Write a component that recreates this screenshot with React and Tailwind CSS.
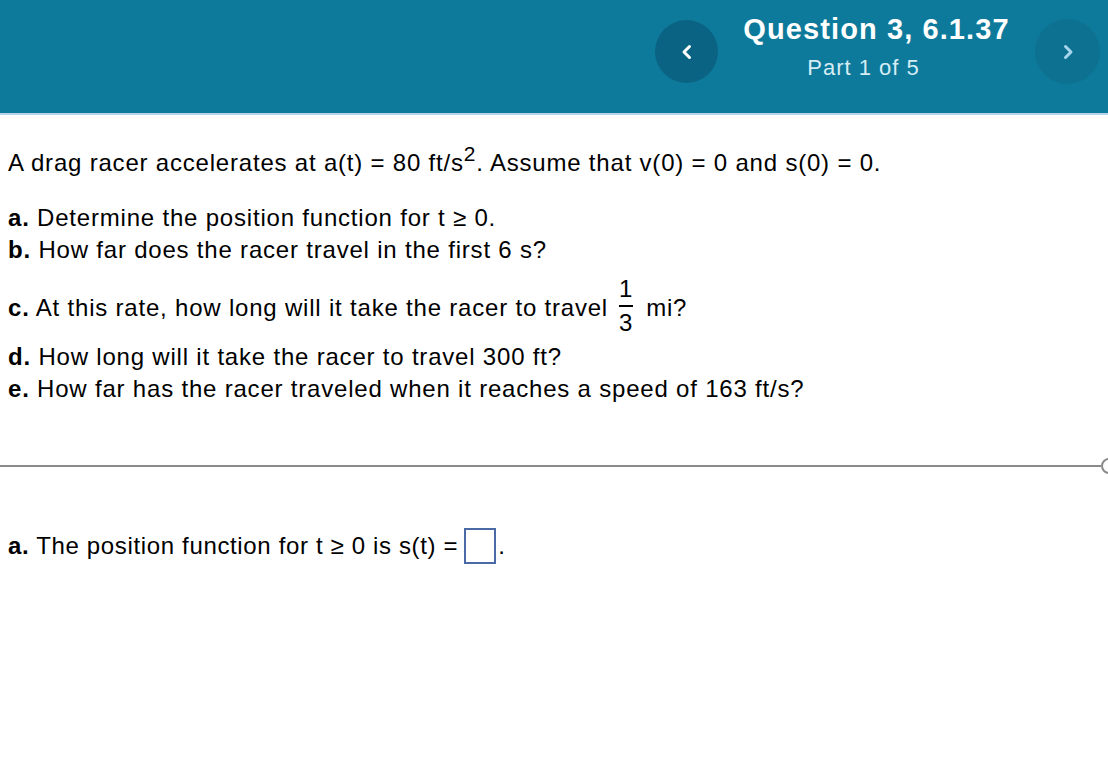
export default function App() {
  const font = { fontFamily: '"Liberation Sans", Arial, sans-serif' };
  return (
    <div className="w-[1108px] h-[766px] bg-white overflow-hidden relative" style={font}>
      <div className="h-[113px] bg-[#0e7a9b] border-b-2 border-[#b9d3ea] box-content flex items-center">
        <div className="flex-1" />
        <div className="w-[63px] h-[63px] rounded-full bg-[#0b6383] flex items-center justify-center mt-[-10px]">
          <svg width="14" height="16" viewBox="0 0 14 16"><path d="M9.5 2.5 L4 8 L9.5 13.5" stroke="#fff" strokeWidth="3" fill="none" strokeLinecap="round" strokeLinejoin="round" /></svg>
        </div>
        <div className="w-[317px] flex flex-col items-center mt-[-22px]">
          <div className="text-[29px] font-bold text-white leading-[36px] tracking-[1.1px]">Question 3, 6.1.37</div>
          <div className="text-[22px] text-[#d6ecf5] leading-[26px] mt-[8px] tracking-[1px] mr-[26px]">Part 1 of 5</div>
        </div>
        <div className="w-[65px] h-[65px] rounded-full bg-[#0d7192] flex items-center justify-center mt-[-10px] mr-[8px]">
          <svg width="14" height="16" viewBox="0 0 14 16"><path d="M4.5 2.5 L10 8 L4.5 13.5" stroke="#a7d6ec" strokeWidth="3" fill="none" strokeLinecap="round" strokeLinejoin="round" /></svg>
        </div>
      </div>

      <div className="pl-[8px] text-[24px] tracking-[0.8px] text-black leading-[32px]">
        <div className="mt-[32px]">A drag racer accelerates at a(t) = 80 ft/s<sup className="text-[21px] relative top-[-10px]">2</sup>. Assume that v(0) = 0 and s(0) = 0.</div>
        <div className="mt-[23px]"><b>a.</b> Determine the position function for t ≥ 0.</div>
        <div><b>b.</b> How far does the racer travel in the first 6 s?</div>
        <div className="flex items-center mt-[10px] h-[64px]">
          <span><b>c.</b> At this rate, how long will it take the racer to travel</span>
          <span className="inline-flex flex-col items-center ml-[11px] mr-[13px] leading-[20px] mt-[-4px]">
            <span>1</span>
            <span className="w-[14px] h-[2px] bg-black mt-[6px] mb-[6px]" />
            <span>3</span>
          </span>
          <span>mi?</span>
        </div>
        <div className="mt-[1px]"><b>d.</b> How long will it take the racer to travel 300 ft?</div>
        <div><b>e.</b> How far has the racer traveled when it reaches a speed of 163 ft/s?</div>
      </div>

      <div className="mt-[53px] flex items-center">
        <div className="flex-1 h-[2px] bg-[#8a8a8a]" />
        <div className="w-[16px] h-[16px] rounded-full border-2 border-[#8a8a8a] shrink-0 mr-[-9px] bg-white" />
      </div>

      <div className="pl-[8px] mt-[54px] text-[24px] tracking-[0.65px] text-black flex items-center">
        <span><b>a.</b> The position function for t ≥ 0 is s(t) =</span>
        <span className="w-[32px] h-[36px] border-2 border-[#4a6aa6] ml-[6px] inline-block" />
        <span className="ml-[2px]">.</span>
      </div>
    </div>
  );
}
